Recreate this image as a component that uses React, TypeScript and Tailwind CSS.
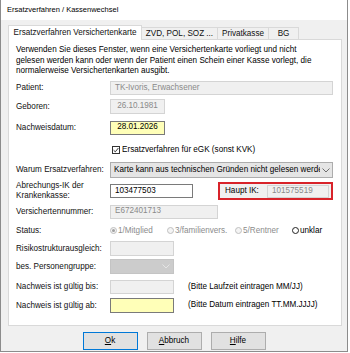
import React from "react";

function Chevron({ color = "#606060" }: { color?: string }) {
  return (
    <svg width="8" height="5" viewBox="0 0 8 5" fill="none">
      <path d="M0.5 0.5 L4 4 L7.5 0.5" stroke={color} strokeWidth="0.9" />
    </svg>
  );
}

function Row({ h, label, children }: { h: string; label: React.ReactNode; children?: React.ReactNode }) {
  return (
    <div className={`flex items-center ${h}`}>
      <div className="w-[94px] shrink-0 leading-[10px]">{label}</div>
      {children}
    </div>
  );
}

function Radio({ label, w, disabled, filled }: { label: string; w?: string; disabled?: boolean; filled?: boolean }) {
  return (
    <div className={`flex items-center gap-[1px] ${w ?? ""}`}>
      <span
        className={`w-[7px] h-[7px] rounded-full border flex items-center justify-center ${
          disabled ? "border-[#c0c0c0] bg-[#f4f4f4]" : "border-[#222] bg-white"
        }`}
      >
        {filled && <span className="w-[3px] h-[3px] rounded-full bg-[#a0a0a0]" />}
      </span>
      <span className={disabled ? "text-[#8c8c8c]" : "text-black font-medium"}>{label}</span>
    </div>
  );
}

export default function App() {
  return (
    <div className="w-[350px] h-[353px] bg-white font-['Liberation_Sans',Arial,sans-serif] text-[8.15px] text-[#111]">
      <div className="w-[348px] h-[352px] border border-t-0 border-[#8c8c8c] bg-[#f0f0f0] flex flex-col">
        {/* Titelleiste */}
        <div className="h-[20px] bg-white pl-[6px] flex items-center text-[7.5px] text-black">
          Ersatzverfahren / Kassenwechsel
        </div>

        <div className="pl-[7px] pr-[5px] pt-[5px]">
          {/* Reiter */}
          <div className="flex items-end h-[15px] relative z-10 -mb-px">
            <div className="w-[134px] h-[15px] bg-white border border-b-0 border-[#d9d9d9] flex items-center justify-center">
              Ersatzverfahren Versichertenkarte
            </div>
            <div className="w-[76px] h-[13px] border border-l-0 border-b-0 border-[#d9d9d9] flex items-center justify-center">
              ZVD, POL, SOZ ...
            </div>
            <div className="w-[51px] h-[13px] border border-l-0 border-b-0 border-[#d9d9d9] flex items-center justify-center">
              Privatkasse
            </div>
            <div className="w-[30px] h-[13px] border border-l-0 border-b-0 border-[#d9d9d9] flex items-center justify-center">
              BG
            </div>
          </div>

          {/* Reiterinhalt */}
          <div className="h-[287px] bg-white border border-[#d9d9d9] pl-[7px] pt-[5px]">
            <p className="leading-[10.5px] text-black">
              Verwenden Sie dieses Fenster, wenn eine Versichertenkarte vorliegt und nicht
              <br />
              gelesen werden kann oder wenn der Patient einen Schein einer Kasse vorlegt, die
              <br />
              normalerweise Versichertenkarten ausgibt.
            </p>

            <div className="mt-[2.5px]">
              <Row h="h-[18px]" label="Patient:">
                <div className="w-[223px] h-[14px] bg-[#f0f0f0] border border-[#d4d4d4] pl-[4px] flex items-center text-[#8a8a8a]">
                  TK-Ivoris, Erwachsener
                </div>
              </Row>
              <Row h="h-[19px]" label="Geboren:">
                <div className="w-[55px] h-[15px] bg-[#f0f0f0] border border-[#d4d4d4] flex items-center justify-center text-[#8a8a8a]">
                  26.10.1981
                </div>
              </Row>
              <Row h="h-[23px]" label="Nachweisdatum:">
                <div className="w-[55px] h-[14px] bg-[#ffffb8] border border-[#7a7a7a] flex items-center justify-center text-black">
                  28.01.2026
                </div>
              </Row>
              <Row h="h-[22px]" label="">
                <div className="flex items-center gap-[2px] ml-[2px]">
                  <span className="w-[8px] h-[8px] border border-[#333] bg-white flex items-center justify-center">
                    <svg width="6" height="6" viewBox="0 0 6 6" fill="none">
                      <path d="M0.6 3.2 L2.3 4.8 L5.4 1" stroke="#222" strokeWidth="0.9" />
                    </svg>
                  </span>
                  <span className="text-black">Ersatzverfahren für eGK (sonst KVK)</span>
                </div>
              </Row>
              <Row h="h-[18px]" label="Warum Ersatzverfahren:">
                <div className="w-[223px] h-[16px] bg-[#e5e5e5] border border-[#adadad] flex items-center">
                  <div className="flex-1 overflow-hidden whitespace-nowrap pl-[3px] text-black">
                    Karte kann aus technischen Gründen nicht gelesen werden
                  </div>
                  <div className="w-[12px] flex items-center justify-center">
                    <Chevron />
                  </div>
                </div>
              </Row>
              <Row
                h="h-[24px]"
                label={
                  <>
                    Abrechungs-IK der
                    <br />
                    Krankenkasse:
                  </>
                }
              >
                <div className="w-[83px] h-[14px] bg-white border border-[#7a7a7a] pl-[4px] flex items-center text-black">
                  103477503
                </div>
                <div className="ml-[25px] w-[115px] h-[18px] border-2 border-[#d8232a] bg-[#f0f0f0] flex items-center pl-[5px]">
                  <span className="w-[42px] text-black">Haupt IK:</span>
                  <div className="w-[62px] h-[13px] bg-[#f0f0f0] border border-[#d4d4d4] pl-[4px] flex items-center text-[#8a8a8a]">
                    101575519
                  </div>
                </div>
              </Row>
              <Row h="h-[17px]" label="Versichertennummer:">
                <div className="w-[108px] h-[14px] bg-[#f0f0f0] border border-[#d4d4d4] pl-[4px] flex items-center text-[#8a8a8a]">
                  E672401713
                </div>
              </Row>
              <Row h="h-[22px]" label="Status:">
                <Radio label="1/Mitglied" w="w-[57px]" disabled filled />
                <Radio label="3/familienvers." w="w-[68px]" disabled />
                <Radio label="5/Rentner" w="w-[57px]" disabled />
                <Radio label="unklar" />
              </Row>
              <Row h="h-[13px]" label="Risikostrukturausgleich:">
                <div className="w-[64px] h-[15px] bg-[#f0f0f0] border border-[#d4d4d4]" />
              </Row>
              <Row h="h-[23px]" label="bes. Personengruppe:">
                <div className="w-[64px] h-[15px] bg-[#cccccc] border border-[#c4c4c4] flex items-center justify-end pr-[3px]">
                  <Chevron color="#e8e8e8" />
                </div>
              </Row>
              <Row h="h-[18px]" label="Nachweis ist gültig bis:">
                <div className="w-[64px] h-[14px] bg-[#f0f0f0] border border-[#d4d4d4]" />
                <span className="ml-[14px] text-black">(Bitte Laufzeit eintragen MM/JJ)</span>
              </Row>
              <Row h="h-[19px]" label="Nachweis ist gültig ab:">
                <div className="w-[64px] h-[15px] bg-[#ffffb8] border border-[#7a7a7a]" />
                <span className="ml-[14px] text-black">(Bitte Datum eintragen TT.MM.JJJJ)</span>
              </Row>
            </div>
          </div>

          {/* Schaltflächen */}
          <div className="flex justify-center gap-[9px] mt-[6px] pr-[2px]">
            <button className="w-[55px] h-[18px] bg-[#e1e1e1] border border-[#0078d7] text-black">
              <span className="underline">O</span>k
            </button>
            <button className="w-[55px] h-[18px] bg-[#e1e1e1] border border-[#adadad] text-black">
              <span className="underline">A</span>bbruch
            </button>
            <button className="w-[55px] h-[18px] bg-[#e1e1e1] border border-[#adadad] text-black">
              <span className="underline">H</span>ilfe
            </button>
          </div>
        </div>
      </div>
    </div>
  );
}
